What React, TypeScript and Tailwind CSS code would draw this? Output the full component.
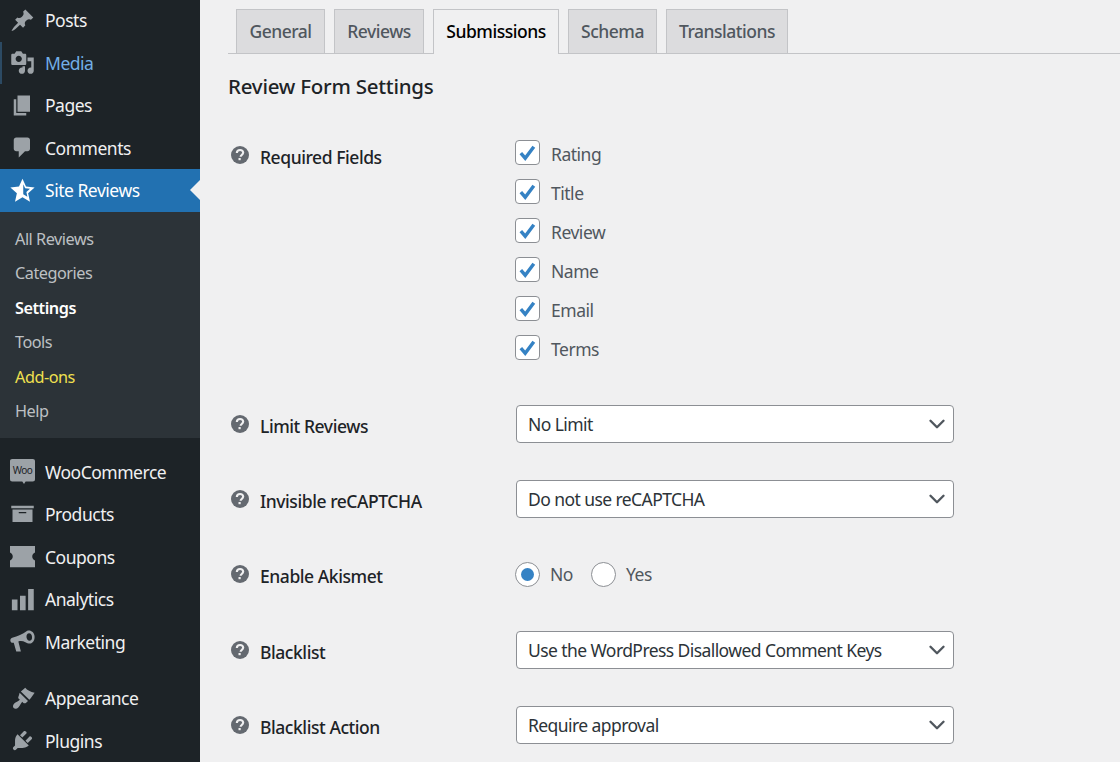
import { ChevronDown } from "lucide-react";
import type { ReactNode } from "react";

const Pin = () => <path d="M10.44 3.02l1.82-1.82 6.36 6.35-1.83 1.82c-1.05-.68-2.48-.57-3.41.36l-.75.75c-.92.93-1.04 2.35-.35 3.41l-1.83 1.82-2.41-2.41-2.8 2.79c-.42.42-3.38 2.71-3.8 2.29s1.86-3.39 2.28-3.81l2.79-2.79L4.1 9.36l1.83-1.82c1.05.69 2.48.57 3.4-.36l.75-.75c.93-.92 1.05-2.35.36-3.41z" />;
const MediaIcon = () => <path d="M13 11V4c0-.55-.45-1-1-1h-1.67L9 1H5L3.67 3H2c-.55 0-1 .45-1 1v7c0 .55.45 1 1 1h10c.55 0 1-.45 1-1zM7 4.5c1.38 0 2.5 1.12 2.5 2.5S8.38 9.5 7 9.5 4.5 8.38 4.5 7 5.62 4.5 7 4.5zM14 6h5v10.5c0 1.38-1.12 2.5-2.5 2.5S14 17.88 14 16.5s1.12-2.5 2.5-2.5c.17 0 .34.02.5.05V9h-3V6zm-4 8.05V13h2v3.5c0 1.38-1.12 2.5-2.5 2.5S7 17.88 7 16.5 8.12 14 9.5 14c.17 0 .34.02.5.05z" fillRule="evenodd" />;
const PageIcon = () => <path d="M6 15V2h10v13H6zm-1 1h8v2H3V5h2v11z" />;
const CommentIcon = () => <path d="M5 2h9c1.1 0 2 .9 2 2v7c0 1.1-.9 2-2 2h-2l-5 5v-5H5c-1.1 0-2-.9-2-2V4c0-1.1.9-2 2-2z" />;
const StarIcon = () => (
  <>
    <path d="M10 .5l2.800 6.300 6.900.7-5.200 4.600 1.500 6.800-6-3.500-6 3.500 1.500-6.800L.3 7.500l6.900-.7z" />
    <path d="M10.600 5l1.500 3.100 3.900.4-2.900 2.600.8 3.900-3.300-2z" fill="#2271b1" />
  </>
);
const WooIcon = () => (
  <>
    <path d="M1.800 0h16.400C19.300 0 20 .7 20 1.800v14.400c0 1.100-.7 1.800-1.800 1.800h-5.700l-1.300 2-1.400-2H1.800C.7 18 0 17.300 0 16.200V1.800C0 .7.7 0 1.800 0z" />
    <text x="10" y="12" textAnchor="middle" fontSize="8" fontFamily="'Noto Sans', sans-serif" fill="#1d2327">Woo</text>
  </>
);
const ArchiveIcon = () => <path d="M19 3v2H1V3h18zM2 6h16v10H2V6zm11 3V8H7v1h6z" fillRule="evenodd" />;
const CouponIcon = () => <path d="M0 1.500h20v5.300c-1.500.6-2.200 2-2.200 3.200s.7 2.600 2.200 3.200v5.300H0v-5.300c1.500-.6 2.200-2 2.200-3.200S1.500 7.400 0 6.800z" />;
const BarsIcon = () => <path d="M1.500 10H6v8.500H1.500zM8 7h4.500v11.500H8zM14.500 1.500H19v17h-4.500z" />;
const MegaphoneIcon = () => (
  <path d="M13.500 1.500c3-1.100 5.700 1 6.100 3.900.4 2.800-.7 5.400-3 6.100-1.300.4-2.900-.1-4.300-1-1.700-.9-3.800-1-5.600-.6l2 8.100H5L3 11c-1.500.3-2.400-.4-2.700-1.500-.2-1.100.3-2 1.500-2.500 4.400-1.300 8.200-3 11.700-5.500zm1.800 1.900c-1.500 0-2.300 1.500-2.100 3.200.2 1.600 1.300 2.900 2.600 2.700 1.400-.2 2-1.600 1.800-3.200-.2-1.500-1-2.700-2.300-2.700z" fillRule="evenodd" />
);
const BrushIcon = () => (
  <path d="M12.200 1.300c1.500 1.800 4.200 3.500 7.500 4-1 1.600-2.500 3.600-4.200 5.700L8.700 4.300zM7.700 5.300l6.700 6.700-1.700 1.500c-.7.600-1.600.3-2.200-.2l-.7-.7c-.5.5-1 1.200-1.500 2.100-.9 1.700-1.900 3.200-3.400 3.400-1.500.2-2.700-.8-2.500-2.200.1-1.300 1.500-2.500 3.200-3.300.9-.5 1.700-1 2.300-1.600l-.7-.7c-.6-.6-.9-1.500-.3-2.200z" />
);
const PlugIcon = () => <path d="M13.11 4.36L9.87 7.6 8 5.73l3.240-3.240c.35-.34 1.050-.2 1.560.32.520.510.660 1.210.310 1.550zm-8 1.770l.91-1.120 9.010 9.010-1.190.84c-.71.710-2.630 1.160-3.820 1.160H6.140L4.900 17.260c-.59.590-1.540.59-2.120 0-.59-.58-.59-1.530 0-2.120l1.240-1.240v-3.880c0-1.130.4-3.190 1.090-3.890zm7.260 3.970l3.240-3.240c.34-.35 1.040-.21 1.550.31.520.510.660 1.210.310 1.550l-3.240 3.250z" />;

function MenuIcon({ children, tone = "fill-[#9ca2a7]" }: { children: ReactNode; tone?: string }) {
  return (
    <svg viewBox="0 0 20 20" className={`h-[25px] w-[25px] shrink-0 ${tone}`}>
      {children}
    </svg>
  );
}

function MenuItem({ label, icon, className = "text-[#f0f0f1]" }: { label: string; icon: ReactNode; className?: string }) {
  return (
    <div className={`flex h-[42.5px] items-center pl-[10px] text-[17.5px] ${className}`}>
      <MenuIcon>{icon}</MenuIcon>
      <span className="ml-[10px]">{label}</span>
    </div>
  );
}

const SUB_ITEMS = [
  { label: "All Reviews", cls: "text-[#bdc0c3]" },
  { label: "Categories", cls: "text-[#bdc0c3]" },
  { label: "Settings", cls: "font-semibold text-white" },
  { label: "Tools", cls: "text-[#bdc0c3]" },
  { label: "Add-ons", cls: "text-[#f0e04f]" },
  { label: "Help", cls: "text-[#bdc0c3]" },
];

function Sidebar() {
  return (
    <aside className="h-[762px] w-[200px] shrink-0 overflow-hidden bg-[#1d2327]">
      <div className="-mt-[1px]">
        <MenuItem label="Posts" icon={<Pin />} />
        <div className="border-l-2 border-[#2c4a63]">
          <div className="-ml-[2px]">
            <MenuItem label="Media" icon={<MediaIcon />} className="text-[#72aee6]" />
          </div>
        </div>
        <MenuItem label="Pages" icon={<PageIcon />} />
        <MenuItem label="Comments" icon={<CommentIcon />} />
        <div className="relative flex h-[42.5px] items-center bg-[#2271b1] pl-[10px] text-[17.5px] text-white">
          <MenuIcon tone="fill-white"><StarIcon /></MenuIcon>
          <span className="ml-[10px]">Site Reviews</span>
          <div className="absolute right-0 top-[11px] h-0 w-0 border-y-[10px] border-r-[10px] border-y-transparent border-r-[#f0f0f1]" />
        </div>
        <div className="bg-[#2c3338] pb-[9px] pt-[10px] text-[16.25px]">
          {SUB_ITEMS.map((item) => (
            <div key={item.label} className={`flex h-[34.5px] items-center pl-[15px] ${item.cls}`}>
              {item.label}
            </div>
          ))}
        </div>
        <div className="h-[13px]" />
        <MenuItem label="WooCommerce" icon={<WooIcon />} />
        <MenuItem label="Products" icon={<ArchiveIcon />} />
        <MenuItem label="Coupons" icon={<CouponIcon />} />
        <MenuItem label="Analytics" icon={<BarsIcon />} />
        <MenuItem label="Marketing" icon={<MegaphoneIcon />} />
        <div className="h-[14px]" />
        <MenuItem label="Appearance" icon={<BrushIcon />} />
        <MenuItem label="Plugins" icon={<PlugIcon />} />
      </div>
    </aside>
  );
}

function HelpIcon() {
  return (
    <svg viewBox="0 0 18 18" className="mb-[4px] h-[18px] w-[18px] shrink-0">
      <circle cx="9" cy="9" r="9" fill="#646970" />
      <path d="M5.800 7c.1-2 1.500-3 3.300-3 1.900 0 3.100 1.100 3.100 2.600 0 1.300-.8 1.900-1.600 2.500-.7.500-1 .8-1 1.600" fill="none" stroke="#f0f0f1" strokeWidth="2.100" />
      <rect x="7.500" y="12" width="2.200" height="2.200" fill="#f0f0f1" />
    </svg>
  );
}

function Row({ label, labelPad, gap, children }: { label: string; labelPad: string; gap: string; children: ReactNode }) {
  return (
    <div className={`flex ${gap}`}>
      <div className={`flex h-fit w-[288px] shrink-0 items-center pl-[3px] ${labelPad}`}>
        <HelpIcon />
        <span className="ml-[11px] text-[17.5px] font-medium leading-[24px] tracking-[-0.025em] text-[#1d2327]">{label}</span>
      </div>
      {children}
    </div>
  );
}

function Select({ value }: { value: string }) {
  return (
    <div className="flex h-[38px] w-[438px] items-center justify-between rounded-[4px] border border-[#8c8f94] bg-white pl-[11px] pr-[3px] text-[17.5px] tracking-[-0.033em] text-[#2c3338]">
      <span>{value}</span>
      <ChevronDown className="h-[26px] w-[26px] text-[#50575e]" strokeWidth={2.2} />
    </div>
  );
}

function Check({ label }: { label: string }) {
  return (
    <div className="flex h-[25px] items-center">
      <div className="flex h-[25px] w-[25px] items-center justify-center rounded-[4px] border border-[#8c8f94] bg-white">
        <svg viewBox="0 0 20 20" className="h-[24px] w-[24px]">
          <path d="M4.200 10.200l3.800 4.300L15.500 4.500" fill="none" stroke="#3582c4" strokeWidth="3" />
        </svg>
      </div>
      <span className="ml-[11px] pt-[3px] text-[17.5px] text-[#50575e]">{label}</span>
    </div>
  );
}

function Radio({ label, checked }: { label: string; checked?: boolean }) {
  return (
    <div className="flex items-center">
      <div className="flex h-[25px] w-[25px] items-center justify-center rounded-full border border-[#8c8f94] bg-white">
        {checked && <div className="h-[13px] w-[13px] rounded-full bg-[#3582c4]" />}
      </div>
      <span className="ml-[10px] text-[17.5px] text-[#50575e]">{label}</span>
    </div>
  );
}

const TABS = ["General", "Reviews", "Submissions", "Schema", "Translations"];
const TAB_WIDTHS: Record<string, string> = {
  General: "w-[89px]",
  Reviews: "w-[90px]",
  Submissions: "w-[126px]",
  Schema: "w-[89px]",
  Translations: "w-[122px]",
};

export default function App() {
  return (
    <div className="flex h-[762px] w-[1120px] overflow-hidden bg-[#f0f0f1] font-['Noto_Sans',sans-serif] tracking-[-0.03em]">
      <Sidebar />
      <main className="flex-1 pl-[28px] pt-[9px]">
        <div className="flex h-[45px] gap-[9px] border-b border-[#c3c4c7] pl-[8px]">
          {TABS.map((tab) =>
            tab === "Submissions" ? (
              <div key={tab} className={`flex h-[45px] items-center justify-center border border-b-0 border-[#c3c4c7] bg-[#f0f0f1] pb-[1px] text-[17.5px] font-medium text-black ${TAB_WIDTHS[tab]}`}>
                {tab}
              </div>
            ) : (
              <div key={tab} className={`flex h-[44px] items-center justify-center border border-b-0 border-[#c3c4c7] bg-[#dcdcde] text-[17.5px] font-medium text-[#50575e] ${TAB_WIDTHS[tab]}`}>
                {tab}
              </div>
            ),
          )}
        </div>
        <h2 className="mt-[18px] text-[20.5px] font-medium leading-[28px] tracking-[-0.012em] text-[#1d2327]">Review Form Settings</h2>
        <Row label="Required Fields" labelPad="pt-[5px]" gap="mt-[40px]">
          <div className="-ml-[1px] flex flex-col gap-[14px]">
            {["Rating", "Title", "Review", "Name", "Email", "Terms"].map((c) => (
              <Check key={c} label={c} />
            ))}
          </div>
        </Row>
        <Row label="Limit Reviews" labelPad="pt-[9px]" gap="mt-[45px]">
          <Select value="No Limit" />
        </Row>
        <Row label="Invisible reCAPTCHA" labelPad="pt-[9px]" gap="mt-[37px]">
          <Select value="Do not use reCAPTCHA" />
        </Row>
        <Row label="Enable Akismet" labelPad="pt-[4px]" gap="mt-[42px]">
          <div className="-ml-[1px] flex gap-[18px]">
            <Radio label="No" checked />
            <Radio label="Yes" />
          </div>
        </Row>
        <Row label="Blacklist" labelPad="pt-[9px]" gap="mt-[43px]">
          <Select value="Use the WordPress Disallowed Comment Keys" />
        </Row>
        <Row label="Blacklist Action" labelPad="pt-[9px]" gap="mt-[37px]">
          <Select value="Require approval" />
        </Row>
      </main>
    </div>
  );
}
